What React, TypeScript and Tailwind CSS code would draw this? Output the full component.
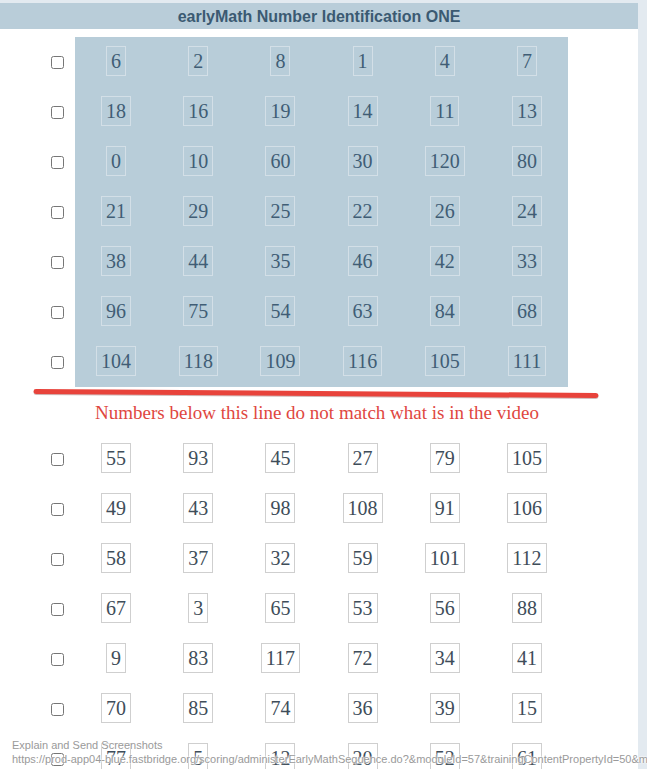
import React from 'react';

const matching: string[][] = [
  ['6', '2', '8', '1', '4', '7'],
  ['18', '16', '19', '14', '11', '13'],
  ['0', '10', '60', '30', '120', '80'],
  ['21', '29', '25', '22', '26', '24'],
  ['38', '44', '35', '46', '42', '33'],
  ['96', '75', '54', '63', '84', '68'],
  ['104', '118', '109', '116', '105', '111'],
];

const others: string[][] = [
  ['55', '93', '45', '27', '79', '105'],
  ['49', '43', '98', '108', '91', '106'],
  ['58', '37', '32', '59', '101', '112'],
  ['67', '3', '65', '53', '56', '88'],
  ['9', '83', '117', '72', '34', '41'],
  ['70', '85', '74', '36', '39', '15'],
  ['77', '5', '12', '20', '52', '61'],
];

function NumberRow({ nums, shaded }: { nums: string[]; shaded: boolean }) {
  return (
    <div className="flex h-[50px]">
      <div className="w-[75px] flex items-center justify-end pr-[11px]">
        <input type="checkbox" className="w-[13px] h-[13px] m-0" />
      </div>
      <div className={`flex w-[493px] ${shaded ? 'bg-[#b8cdd9]' : ''}`}>
        {nums.map((n, i) => (
          <div key={i} className="w-[82.2px] flex items-center justify-center pb-[2px]">
            <span
              className={`border px-[4px] leading-[28px] text-[20px] font-['Liberation_Serif',serif] ${
                shaded ? 'border-[#d3dfe7] text-[#405d75]' : 'border-[#cfcfcf] text-[#3e4d59] bg-white'
              }`}
            >
              {n}
            </span>
          </div>
        ))}
      </div>
    </div>
  );
}

export default function App() {
  return (
    <div className="relative w-[647px] h-[769px] overflow-hidden bg-[#e3eaf0] flex font-['Liberation_Sans',Arial,sans-serif]">
      <div className="w-[638px] mt-[3px] bg-white">
        <div className="h-[26px] pt-[2px] bg-[#b9cdd9] flex items-center justify-center text-[16px] font-bold text-[#3b5a72]">
          earlyMath Number Identification ONE
        </div>

        <div className="pt-[8px]">
          {matching.map((row, i) => (
            <NumberRow key={i} nums={row} shaded />
          ))}
        </div>

        <svg width="638" height="12" className="block">
          <line x1="36" y1="5.5" x2="596" y2="9.5" stroke="#7a3b38" strokeWidth="5" strokeLinecap="round" opacity="0.35" />
          <line x1="36" y1="4.5" x2="596" y2="8.5" stroke="#e8433b" strokeWidth="5" strokeLinecap="round" />
        </svg>
        <div className="mt-[3px] mb-[10px] h-[22px] leading-[22px] text-center text-[19px] text-[#e0473f] font-['Liberation_Serif',serif] pr-[4px]">
          Numbers below this line do not match what is in the video
        </div>

        <div>
          {others.map((row, i) => (
            <NumberRow key={i} nums={row} shaded={false} />
          ))}
        </div>
      </div>

      <div className="absolute left-[12px] top-[738px] text-[11px] leading-[14px] text-[#9a9a9a] whitespace-nowrap [text-shadow:0_0_2px_#fff,0_0_2px_#fff,0_0_2px_#fff]">
        <div>Explain and Send Screenshots</div>
        <div>https://prod-app04-blue.fastbridge.org/scoring/administerEarlyMathSequence.do?&amp;moduleId=57&amp;trainingContentPropertyId=50&amp;m</div>
      </div>
    </div>
  );
}
